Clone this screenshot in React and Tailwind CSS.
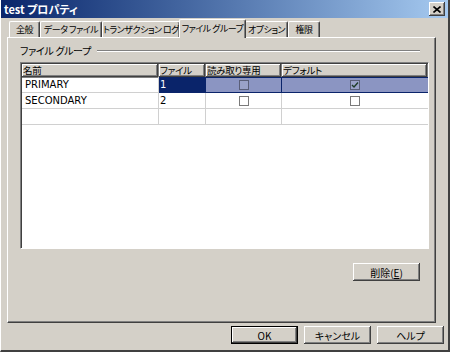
import React from 'react';

const raised = "shadow-[inset_-1px_-1px_#404040,inset_1px_1px_#ffffff,inset_-2px_-2px_#808080,inset_2px_2px_#d4d0c8]";

const tabs = [
  { label: '全般', w: 'w-[31px]' },
  { label: 'データ ファイル', w: 'w-[62px]' },
  { label: 'トランザクション ログ', w: 'w-[78px]' },
  { label: 'ファイル グループ', w: 'w-[67px]', active: true },
  { label: 'オプション', w: 'w-[43px]' },
  { label: '権限', w: 'w-[32px]' },
];

const rows = [
  { name: 'PRIMARY', file: '1', readonly: false, def: true, selected: true },
  { name: 'SECONDARY', file: '2', readonly: false, def: false },
  { name: '', file: '', empty: true },
];

const Check = ({ checked, selected }) => (
  <span
    className={`w-[10px] h-[10px] border flex items-center justify-center ${
      selected ? 'border-[#5a5f78] bg-[#9aa2c8]' : 'border-[#7a7a7a] bg-white'
    }`}
  >
    {checked && (
      <svg width="8" height="8" viewBox="0 0 8 8">
        <path d="M1 4 L3 6 L7 1.5" stroke="#1e3c28" strokeWidth="1.4" fill="none" />
      </svg>
    )}
  </span>
);

const Button = ({ children, isDefault, className = '' }) => (
  <button
    className={`h-[18px] w-[67px] bg-[#d4d0c8] text-[10px] text-black flex items-center justify-center ${
      isDefault ? 'border border-black' : ''
    } ${raised} ${className}`}
  >
    {children}
  </button>
);

export default function App() {
  return (
    <div className="w-[450px] h-[352px] bg-[#d4d0c8] flex flex-col font-['Noto_Sans_CJK_JP','DejaVu_Sans',sans-serif] [font-feature-settings:'palt'] text-black border-l border-l-white border-r-2 border-r-[#404040] border-b-2 border-b-[#404040] overflow-hidden">
      {/* title bar */}
      <div className="h-[18px] flex items-center justify-between pl-[3px] pr-[3px] bg-gradient-to-r from-[#0a246a] to-[#a6caf0]">
        <span className="text-white text-[11px] font-bold leading-none">test プロパティ</span>
        <span className={`w-[16px] h-[14px] bg-[#d4d0c8] flex items-center justify-center ${raised}`}>
          <svg width="8" height="7" viewBox="0 0 8 7">
            <path d="M0.5 0.5 L7.5 6.5 M7.5 0.5 L0.5 6.5" stroke="#000" strokeWidth="1.6" />
          </svg>
        </span>
      </div>

      {/* tabs */}
      <div className="flex items-end h-[19px] pl-[8px]">
        {tabs.map((t) => (
          <div
            key={t.label}
            className={`${t.w} flex items-center justify-center whitespace-nowrap text-[9px] tracking-[-0.5px] leading-none border-l border-t border-white border-r border-r-[#404040] shadow-[inset_-1px_0_#808080] rounded-t-[2px] ${
              t.active ? 'h-[19px] -mx-[1px] z-10 relative bg-[#d4d0c8] -mb-[1px] pb-[1px]' : 'h-[16px]'
            }`}
          >
            {t.label}
          </div>
        ))}
      </div>

      {/* panel */}
      <div className="ml-[6px] w-[429px] h-[286px] border-l border-t border-white border-r border-b border-r-[#404040] border-b-[#404040] shadow-[inset_-1px_-1px_#808080] flex flex-col px-[12px] pt-[6px]">
        <div className="flex items-center h-[14px]">
          <span className="text-[10px] tracking-[-0.3px] leading-none pr-[6px] whitespace-nowrap">ファイル グループ</span>
          <div className="flex-1 border-t border-t-[#808080] border-b border-b-white mr-[3px]" />
        </div>

        <div className="mt-[4px] w-[409px] h-[187px] bg-white border-l border-t border-[#808080] border-r border-b border-r-white border-b-white shadow-[inset_1px_1px_#404040]">
          <div className="pl-[1px] pt-[1px]">
            <div className="grid grid-cols-[137px_47px_76px_146px] h-[13px] text-[9.5px] tracking-[-0.3px] leading-[13px]">
              {['名前', 'ファイル', '読み取り専用', 'デフォルト'].map((h) => (
                <div
                  key={h}
                  className={`bg-[#d4d0c8] flex items-center pl-[1px] whitespace-nowrap border-r border-b border-[#808080] ${raised}`}
                >
                  {h}
                </div>
              ))}
            </div>
            {rows.map((r, i) => (
              <div key={i} className="grid grid-cols-[137px_47px_76px_146px] h-[16px] text-[10px] leading-none font-['DejaVu_Sans',sans-serif]">
                <div className="flex items-center pl-[3px] border-r border-b border-[#d0d0d0]">{r.name}</div>
                <div
                  className={`flex items-center pl-[1px] ${
                    r.selected ? 'bg-[#0a246a] text-white border-y border-[#0a246a]' : 'border-r border-b border-[#d0d0d0]'
                  }`}
                >
                  {r.file}
                </div>
                <div
                  className={`flex items-center justify-center ${
                    r.selected ? 'bg-[#8b95c2] border-y border-r border-[#0a246a]' : 'border-r border-b border-[#d0d0d0]'
                  }`}
                >
                  {!r.empty && <Check checked={r.readonly} selected={r.selected} />}
                </div>
                <div
                  className={`flex items-center justify-center ${
                    r.selected ? 'bg-[#8b95c2] border-y border-[#0a246a]' : 'border-b border-[#d0d0d0]'
                  }`}
                >
                  {!r.empty && <Check checked={r.def} selected={r.selected} />}
                </div>
              </div>
            ))}
          </div>
        </div>

        <div className="flex justify-end mt-[14px] pr-[3px]">
          <Button className="w-[66px]">
            <span>
              削除(<span className="underline">E</span>)
            </span>
          </Button>
        </div>
      </div>

      {/* footer */}
      <div className="flex justify-end gap-[6px] pt-[3px] pr-[4px]">
        <Button isDefault>OK</Button>
        <Button>キャンセル</Button>
        <Button>ヘルプ</Button>
      </div>
    </div>
  );
}
